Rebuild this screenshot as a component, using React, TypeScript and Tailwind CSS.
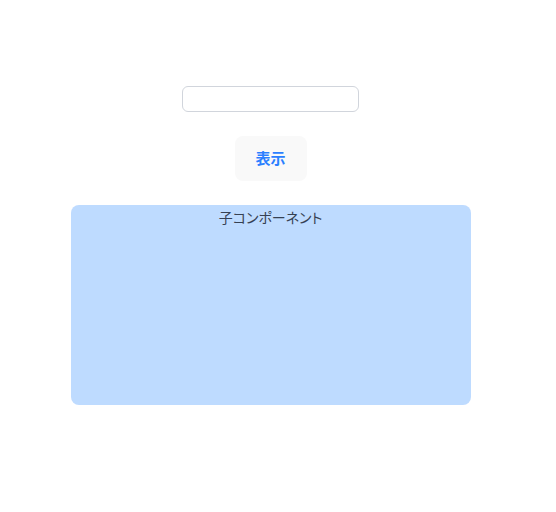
export default function App() {
  return (
    <div
      className="w-[541px] min-h-[512px] bg-white flex flex-col items-center pt-[86px]"
      style={{ fontFamily: '"Noto Sans CJK JP", "Noto Sans", sans-serif' }}
    >
      <input
        type="text"
        className="w-[177px] h-[26px] border border-gray-300 rounded-md px-2 text-sm outline-none"
      />
      <button className="mt-[24px] w-[72px] h-[45px] rounded-lg bg-[#f9f9f9] text-blue-500 font-semibold text-[15px]">
        表示
      </button>
      <div className="mt-[24px] w-[400px] h-[200px] rounded-lg bg-blue-200 text-center text-gray-700 text-[14px] leading-6 [font-feature-settings:'palt']">
        子コンポーネント
      </div>
    </div>
  );
}
